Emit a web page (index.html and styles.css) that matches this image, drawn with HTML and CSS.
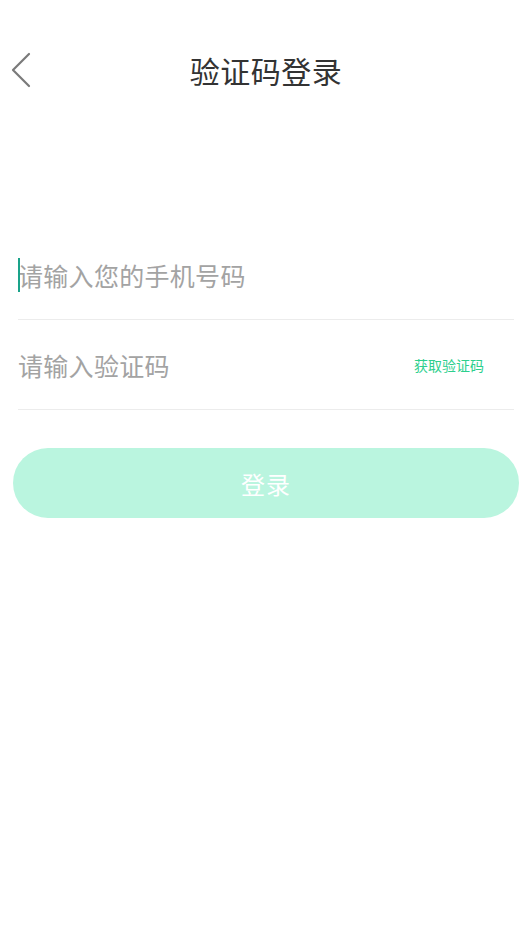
FILE: index.html
```html
<!DOCTYPE html>
<html lang="zh-CN">
<head>
<meta charset="utf-8">
<title>验证码登录</title>
<link rel="stylesheet" href="styles.css">
</head>
<body>
<div class="page">
  <header class="nav">
    <button class="back" aria-label="返回">
      <svg width="20" height="36" viewBox="0 0 20 36"><path d="M18 2 L2 18 L18 34" fill="none" stroke="#7a7a7a" stroke-width="2.2" stroke-linecap="round" stroke-linejoin="round"/></svg>
    </button>
    <h1 class="title">验证码登录</h1>
    <span></span>
  </header>
  <form class="form">
    <div class="row">
      <span class="caret"></span>
      <span class="placeholder">请输入您的手机号码</span>
    </div>
    <div class="row">
      <span class="placeholder">请输入验证码</span>
      <span class="getcode">获取验证码</span>
    </div>
  </form>
  <div class="btn-wrap">
    <button class="login" type="button">登录</button>
  </div>
</div>
</body>
</html>
```

FILE: styles.css
```css
* { box-sizing: border-box; }
html, body {
  margin: 0;
  padding: 0;
  background: #fff;
  font-family: "Noto Sans CJK SC", "Noto Sans", sans-serif;
}
.page {
  width: 532px;
  min-height: 944px;
}
.nav {
  height: 144px;
  display: grid;
  grid-template-columns: 1fr auto 1fr;
  align-items: center;
}
.back {
  justify-self: start;
  border: 0;
  background: none;
  padding: 0 0 0 11px;
  margin-top: -4px;
  display: flex;
  align-items: center;
  cursor: pointer;
}
.title {
  margin: -4px 0 0 0;
  font-size: 30px;
  font-weight: 400;
  color: #333;
  letter-spacing: 0.5px;
}
.form {
  margin: 86px 18px 0 18px;
}
.row {
  height: 90px;
  border-bottom: 1px solid #ececec;
  display: flex;
  align-items: center;
  position: relative;
}
.placeholder {
  font-size: 25px;
  color: #a3a3a3;
  letter-spacing: 0.3px;
  flex: 1;
}
.caret {
  position: absolute;
  left: 0;
  top: 28px;
  width: 2px;
  height: 34px;
  background: #1aa38a;
}
.getcode {
  font-size: 14px;
  color: #2dcf8d;
  margin-right: 30px;
}
.btn-wrap {
  padding: 38px 13px 0 13px;
}
.login {
  width: 100%;
  height: 70px;
  border: 0;
  border-radius: 35px;
  background: #baf5df;
  color: #fff;
  font-family: inherit;
  font-size: 24px;
  letter-spacing: 1px;
}
```
